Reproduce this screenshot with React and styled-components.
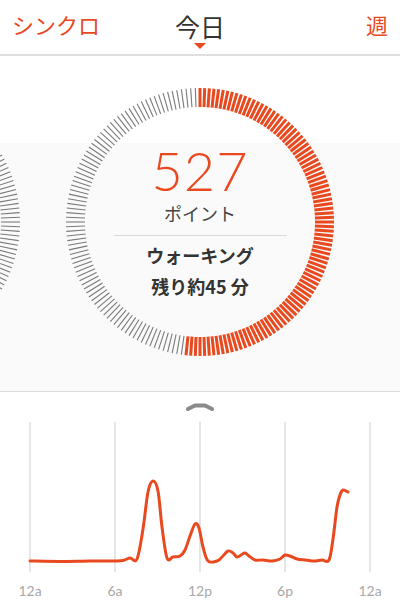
import React from 'react';
import styled, { createGlobalStyle } from 'styled-components';

const ORANGE = '#e8491f';
const TICKS = 180;

const GlobalStyle = createGlobalStyle`
  html, body {
    margin: 0;
    padding: 0;
    background: #fff;
    font-family: "Noto Sans CJK JP", "Noto Sans", sans-serif;
  }
`;

const Page = styled.div`
  width: 400px;
  height: 600px;
  overflow: hidden;
  background: #fff;
`;

const Header = styled.header`
  height: 44px;
  padding: 10px 12px 0;
  border-bottom: 2px solid #dedede;
  display: grid;
  grid-template-columns: 1fr auto 1fr;
  align-items: start;
`;

const HeaderLink = styled.span`
  font-size: 22px;
  line-height: 28px;
  color: ${ORANGE};
  justify-self: ${(p) => (p.$right ? 'end' : 'start')};
`;

const TitleBlock = styled.div`
  display: flex;
  flex-direction: column;
  align-items: center;
`;

const Title = styled.h1`
  margin: 1px 0 0;
  font-size: 25px;
  line-height: 30px;
  font-weight: 400;
  color: #333;
`;

const Caret = styled.div`
  margin-top: 2px;
  width: 0;
  height: 0;
  border-left: 6px solid transparent;
  border-right: 6px solid transparent;
  border-top: 6px solid ${ORANGE};
`;

const Hero = styled.section`
  height: 336px;
  box-sizing: border-box;
  padding-top: 31px;
  border-bottom: 1px solid #dcdcdc;
  background: linear-gradient(#fff 87px, #fafafa 87px);
  display: flex;
  justify-content: center;
  gap: 44px;
  overflow: hidden;
`;

const RingSlot = styled.div`
  flex: 0 0 270px;
  height: 270px;
  display: grid;

  & > * {
    grid-area: 1 / 1;
  }
`;

const RingCenter = styled.div`
  display: flex;
  flex-direction: column;
  align-items: center;
  justify-content: center;
  padding-top: 2px;
`;

const Points = styled.div`
  font-family: Lato, "Open Sans", sans-serif;
  font-weight: 300;
  font-size: 54px;
  line-height: 46px;
  letter-spacing: 1px;
  color: ${ORANGE};
`;

const Unit = styled.div`
  margin-top: 8px;
  font-size: 18px;
  line-height: 22px;
  color: #444;
`;

const Divider = styled.div`
  margin-top: 11px;
  width: 173px;
  height: 1px;
  background: #ddd8d8;
`;

const Activity = styled.div`
  margin-top: ${(p) => p.$gap}px;
  font-size: 18px;
  line-height: 24px;
  font-weight: 700;
  color: #333;
`;

const ChartSection = styled.section`
  display: flex;
  flex-direction: column;
  align-items: center;
`;

const Chevron = styled.svg`
  margin-top: 10px;
  display: block;
`;

const Chart = styled.svg`
  display: block;
`;

const Ring = ({ filled }) => {
  const ticks = [];
  for (let i = 0; i < TICKS; i++) {
    const a = (i * 2 * Math.PI) / TICKS;
    const s = Math.sin(a);
    const c = Math.cos(a);
    const on = i < filled;
    ticks.push(
      <line
        key={i}
        x1={135 + 115 * s}
        y1={135 - 115 * c}
        x2={135 + 134 * s}
        y2={135 - 134 * c}
        stroke={on ? ORANGE : '#7a7a7a'}
        strokeWidth={on ? 3 : 1.1}
      />
    );
  }
  return (
    <svg width="270" height="270" viewBox="0 0 270 270">
      {ticks}
    </svg>
  );
};

const curve = [
  [30, 562], [60, 562.5], [90, 562], [115, 562], [123, 561.5], [130, 559],
  [137, 560], [143, 530], [148, 493], [153, 482], [158, 492], [162, 528],
  [167, 559], [173, 558], [180, 557], [185, 551], [190, 537], [195, 525],
  [199, 529], [203, 548], [208, 562], [217, 562], [222, 558], [228, 552],
  [233, 554], [237, 558], [241, 556], [245, 554], [249, 557], [255, 561],
  [263, 561], [272, 562], [280, 560], [285, 556], [290, 557], [297, 560],
  [306, 561], [314, 562], [322, 561], [329, 561], [333, 540], [337, 508],
  [340, 496], [343, 491], [348, 493],
];

const smoothPath = (pts) => {
  let d = `M${pts[0][0]} ${pts[0][1]}`;
  for (let i = 0; i < pts.length - 1; i++) {
    const p0 = pts[i - 1] || pts[i];
    const p1 = pts[i];
    const p2 = pts[i + 1];
    const p3 = pts[i + 2] || p2;
    const c1x = p1[0] + (p2[0] - p0[0]) / 6;
    const c1y = p1[1] + (p2[1] - p0[1]) / 6;
    const c2x = p2[0] - (p3[0] - p1[0]) / 6;
    const c2y = p2[1] - (p3[1] - p1[1]) / 6;
    d += ` C${c1x} ${c1y} ${c2x} ${c2y} ${p2[0]} ${p2[1]}`;
  }
  return d;
};

const hours = [
  [30, '12a'],
  [115, '6a'],
  [200, '12p'],
  [285, '6p'],
  [370, '12a'],
];

const App = () => {
  return (
    <Page>
      <GlobalStyle />

      <Header>
        <HeaderLink>シンクロ</HeaderLink>
        <TitleBlock>
          <Title>今日</Title>
          <Caret />
        </TitleBlock>
        <HeaderLink $right>週</HeaderLink>
      </Header>

      <Hero>
        <RingSlot>
          <Ring filled={0} />
        </RingSlot>

        <RingSlot>
          <Ring filled={94} />
          <RingCenter>
            <Points>527</Points>
            <Unit>ポイント</Unit>
            <Divider />
            <Activity $gap={7}>ウォーキング</Activity>
            <Activity $gap={7}>残り約45 分</Activity>
          </RingCenter>
        </RingSlot>

        <RingSlot />
      </Hero>

      <ChartSection>
        <Chevron width="30" height="10" viewBox="185 402 30 10">
          <path
            d="M188 409 L195 405.5 L205 405.5 L212 409"
            fill="none"
            stroke="#8a8a8a"
            strokeWidth="4"
            strokeLinecap="round"
            strokeLinejoin="round"
          />
        </Chevron>

        <Chart width="400" height="187" viewBox="0 413 400 187">
          {hours.map(([x]) => (
            <line key={x} x1={x} y1={423} x2={x} y2={573} stroke="#dedede" strokeWidth="1.5" />
          ))}
          <path d={smoothPath(curve)} fill="none" stroke={ORANGE} strokeWidth="3" strokeLinejoin="round" strokeLinecap="round" />
          {hours.map(([x, label], i) => (
            <text
              key={i}
              x={x}
              y={597}
              textAnchor="middle"
              fontFamily="Lato, 'Open Sans', sans-serif"
              fontSize="14"
              fill="#a8a8a8"
            >
              {label}
            </text>
          ))}
        </Chart>
      </ChartSection>
    </Page>
  );
};

export default App;
